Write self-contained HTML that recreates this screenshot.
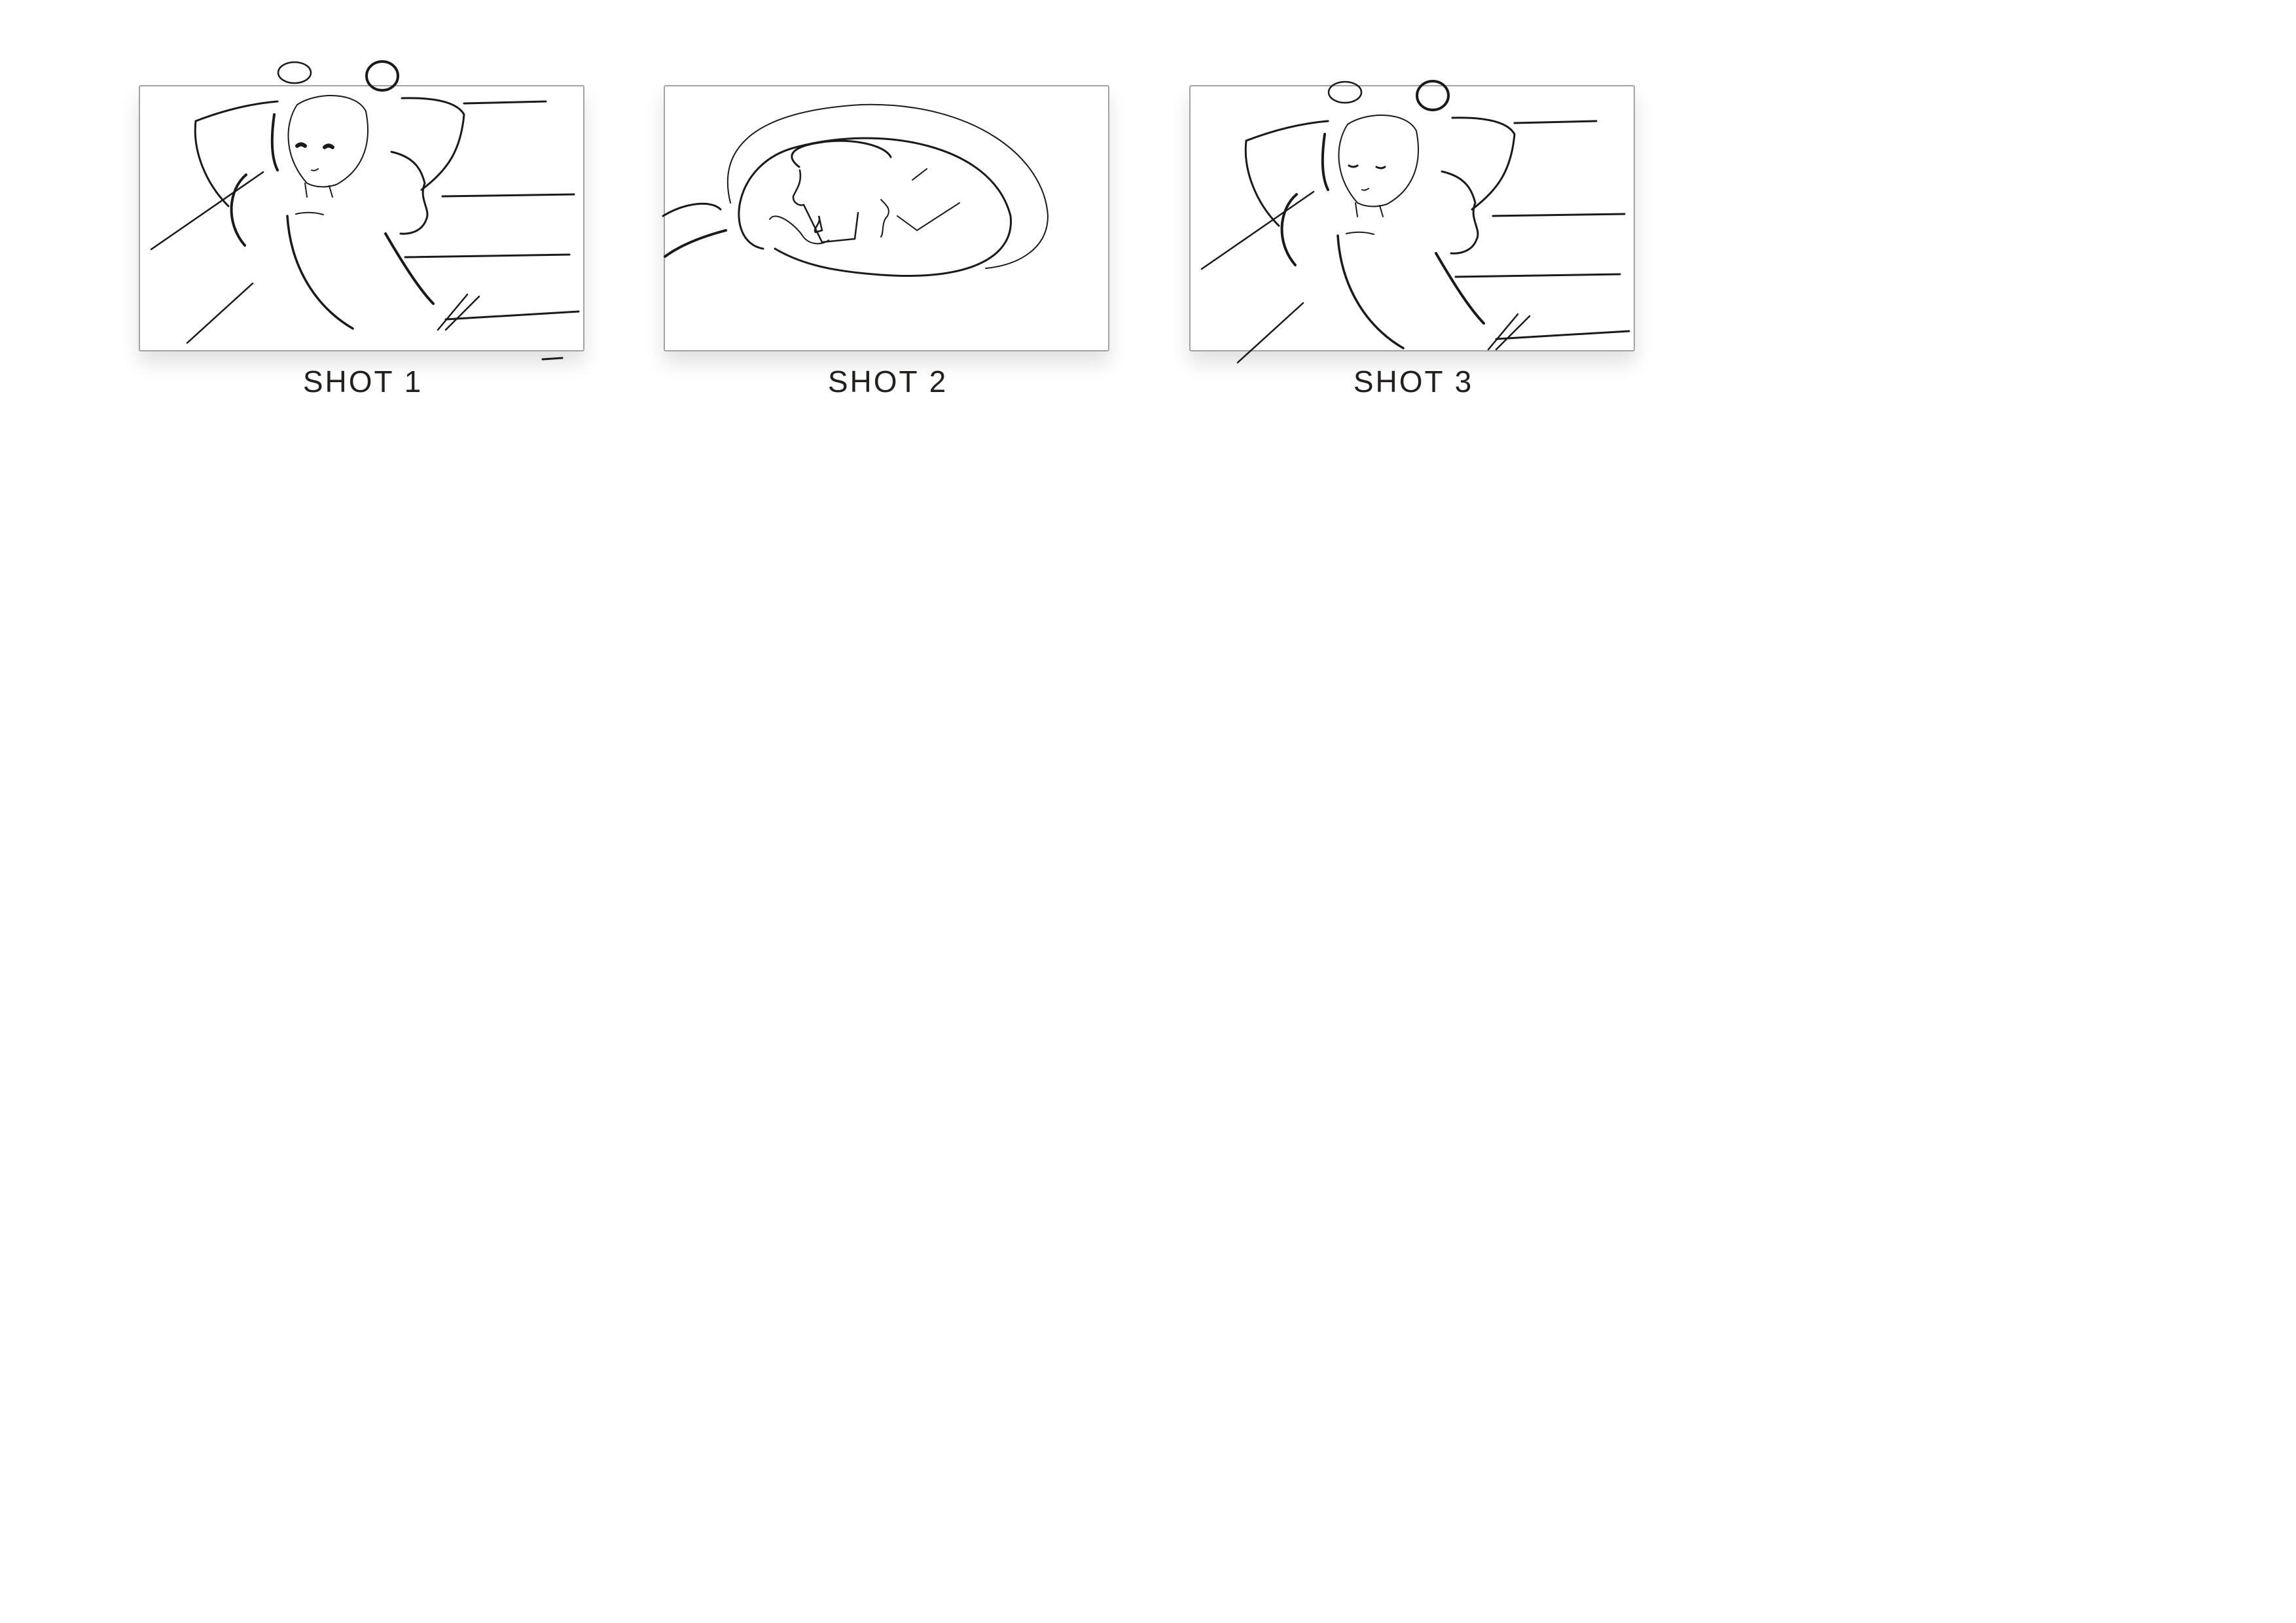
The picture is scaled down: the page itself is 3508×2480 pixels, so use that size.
<!DOCTYPE html>
<html><head><meta charset="utf-8"><style>
html,body{margin:0;padding:0;background:#fff;}
body{width:3508px;height:2480px;position:relative;overflow:hidden;font-family:"Liberation Sans",sans-serif;}
.fr{position:absolute;top:130px;width:677px;height:403px;border:2px solid #a3a3a3;border-radius:3px;background:#fff;box-shadow:0 18px 30px rgba(0,0,0,0.12);}
.lb{position:absolute;top:556px;width:681px;text-align:center;font-size:46px;color:#231f1c;letter-spacing:3px;}
svg{position:absolute;left:0;top:0;overflow:visible}
</style></head><body>
<div class="fr" style="left:212px"></div>
<div class="fr" style="left:1014px"></div>
<div class="fr" style="left:1817px"></div>
<div class="lb" style="left:214px">SHOT 1</div>
<div class="lb" style="left:1016px">SHOT 2</div>
<div class="lb" style="left:1819px">SHOT 3</div>
<svg width="3508" height="2480" viewBox="0 0 3508 2480" fill="none" stroke="#1a1a1a" stroke-linecap="round">
<defs>
<g id="girl">
<ellipse cx="236" cy="-19" rx="25" ry="16" stroke-width="2.5"/>
<ellipse cx="370" cy="-14" rx="24" ry="22" stroke-width="4"/>
<path d="M240 30 C220 60 220 110 255 150 Q275 160 300 152 C340 130 355 90 345 40 C330 10 270 10 240 30" stroke-width="2"/>
<path d="M205 45 C200 80 200 110 210 130" stroke-width="4"/>
<path d="M85 55 C80 100 100 150 135 185" stroke-width="3"/>
<path d="M85 55 Q150 30 210 25" stroke-width="3"/>
<path d="M400 20 Q480 18 495 45 C490 100 470 130 430 160" stroke-width="3"/>
<path d="M162 137 C135 160 130 210 160 245" stroke-width="4"/>
<path d="M225 200 C230 280 270 340 325 372" stroke-width="3.5"/>
<path d="M375 227 C400 270 425 310 448 334" stroke-width="4"/>
<path d="M384 102 C420 110 430 130 435 150 C425 175 445 190 437 206 C430 225 410 228 398 227" stroke-width="3"/>
<path d="M252 150 L255 171 M289 154 L294 171" stroke-width="2"/>
<path d="M518 323 L467 374 M500 320 L455 374" stroke-width="2.5"/>
<path d="M495 28 L620 25 M462 170 L663 167 M405 263 L656 259 M467 358 L670 346" stroke-width="3"/>
<path d="M17 251 L188 133 M72 394 L172 303" stroke-width="2.5"/>
<path d="M238 197 Q260 192 280 198" stroke-width="2"/>
</g>
</defs>
<g transform="translate(214,130)">
<use href="#girl"/>
<path d="M240 93 q6 -5 12 0 M282 95 q6 -5 12 0" stroke-width="6"/>
<path d="M262 130 q5 2 10 -2" stroke-width="2"/>
<path d="M615 419 L645 417" stroke-width="3"/>
</g>
<g transform="translate(1016,130)">
<path d="M150 250 C90 240 100 120 200 95 C330 60 500 90 528 200 C535 260 470 300 330 290 C260 285 210 275 168 250" stroke-width="3"/>
<path d="M100 180 C80 100 130 40 300 30 C470 25 580 110 585 200 C585 250 540 275 490 280" stroke-width="2"/>
<path d="M205 125 C185 110 190 95 235 88 C280 80 335 90 345 110" stroke-width="3"/>
<path d="M206 130 C210 150 200 160 196 170 C195 180 205 185 212 183 L240 240 L290 235 L295 195" stroke-width="2.5"/>
<path d="M235 200 C240 210 225 220 230 225 L240 222 Z" stroke-width="2.5"/>
<path d="M330 175 C340 185 345 190 340 200 C330 210 335 225 330 232" stroke-width="2"/>
<path d="M355 200 L385 222 L450 180" stroke-width="2"/>
<path d="M160 205 C170 190 200 215 210 230 C220 245 240 245 250 237" stroke-width="2"/>
<path d="M-3 200 C30 180 70 175 85 190" stroke-width="3"/>
<path d="M0 262 C30 240 70 228 93 222" stroke-width="4"/>
<path d="M378 145 L400 128" stroke-width="2"/>
</g>
<g transform="translate(1819,160)">
<use href="#girl"/>
<path d="M242 93 q7 4 13 0 M284 95 q7 4 13 0" stroke-width="3"/>
<path d="M262 130 q5 2 10 -2" stroke-width="2"/>
</g>
</svg>
</body></html>
